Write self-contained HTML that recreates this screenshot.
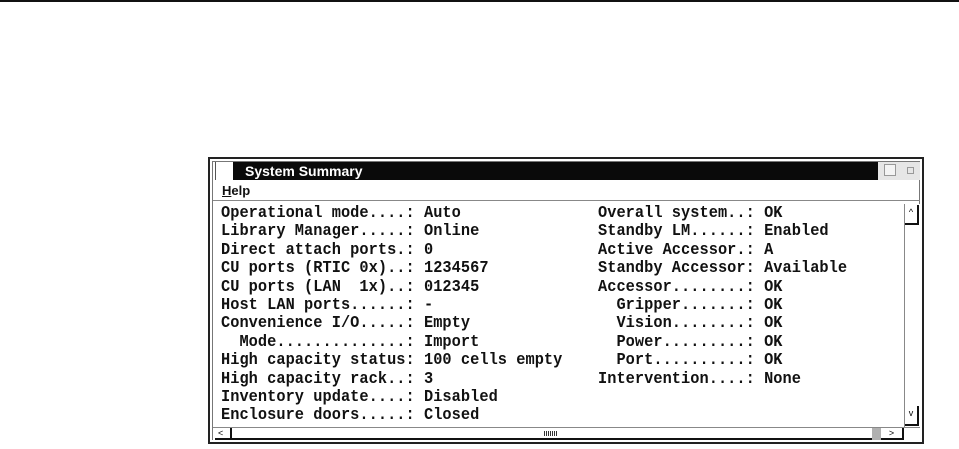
<!DOCTYPE html>
<html><head><style>
body{margin:0;width:959px;height:449px;background:#fff;position:relative;overflow:hidden;font-family:"Liberation Sans",sans-serif}
.abs{position:absolute}
.txt{position:absolute;font-family:"Liberation Mono",monospace;font-weight:bold;font-size:17px;line-height:18.4px;white-space:pre;color:#111;letter-spacing:0.05px;transform:scaleX(0.9);transform-origin:0 0}
</style></head><body>
<div class="abs" style="left:0;top:0;width:959px;height:2px;background:#111"></div>
<div class="abs" style="left:208px;top:157px;width:716px;height:287px;border:2px solid #222;box-sizing:border-box;background:#fff"></div>
<div class="abs" style="left:212px;top:161px;width:708px;height:279px;border:1px solid #777;box-sizing:border-box"></div>
<div class="abs" style="left:215px;top:162px;width:18px;height:18px;background:#fff;border-left:1px solid #555"></div>
<div class="abs" style="left:233px;top:162px;width:645px;height:18px;background:#0a0a0a;color:#fff;font-weight:bold;font-size:14px;line-height:18px;padding-left:12px;box-sizing:border-box">System Summary</div>
<div class="abs" style="left:878px;top:162px;width:42px;height:18px;background:#e6e6e6"></div>
<div class="abs" style="left:884px;top:164px;width:12px;height:12px;border:1px solid #999;box-sizing:border-box;background:#f4f4f4"></div>
<div class="abs" style="left:907px;top:167px;width:7px;height:7px;border:1px solid #999;box-sizing:border-box"></div>
<div class="abs" style="left:222px;top:183px;font-weight:bold;font-size:13px;line-height:16px;color:#111"><span style="text-decoration:underline">H</span>elp</div>
<div class="abs" style="left:213px;top:200px;width:707px;height:1px;background:#888"></div>
<div class="txt" style="left:221px;top:205px">Operational mode....: Auto
Library Manager.....: Online
Direct attach ports.: 0
CU ports (RTIC 0x)..: 1234567
CU ports (LAN  1x)..: 012345
Host LAN ports......: -
Convenience I/O.....: Empty
  Mode..............: Import
High capacity status: 100 cells empty
High capacity rack..: 3
Inventory update....: Disabled
Enclosure doors.....: Closed</div>
<div class="txt" style="left:598px;top:205px">Overall system..: OK
Standby LM......: Enabled
Active Accessor.: A
Standby Accessor: Available
Accessor........: OK
  Gripper.......: OK
  Vision........: OK
  Power.........: OK
  Port..........: OK
Intervention....: None</div>
<div class="abs" style="left:904px;top:204px;width:16px;height:223px;border-left:1px solid #888;box-sizing:border-box;background:#fff"></div>
<div class="abs" style="left:905px;top:205px;width:14px;height:20px;border-right:2px solid #111;border-bottom:2px solid #111;box-sizing:border-box;font-size:9px;text-align:center;line-height:14px">^</div>
<div class="abs" style="left:905px;top:406px;width:14px;height:20px;border-right:2px solid #111;border-bottom:2px solid #111;box-sizing:border-box;font-size:9px;text-align:center;line-height:14px">v</div>
<div class="abs" style="left:213px;top:427px;width:707px;height:13px;border-top:1px solid #888;box-sizing:border-box;background:#fff"></div>
<div class="abs" style="left:215px;top:428px;width:657px;height:12px;border-bottom:2px solid #111;box-sizing:border-box"></div>
<div class="abs" style="left:230px;top:428px;width:2px;height:12px;background:#111"></div>
<div class="abs" style="left:218px;top:428px;font-size:9px;line-height:11px">&lt;</div>
<div class="abs" style="left:544px;top:431px;width:14px;height:5px;background:repeating-linear-gradient(90deg,#333 0 1px,#fff 1px 2px)"></div>
<div class="abs" style="left:872px;top:428px;width:9px;height:12px;background:#b0b0b0"></div>
<div class="abs" style="left:881px;top:428px;width:23px;height:12px;border-right:2px solid #111;border-bottom:2px solid #111;box-sizing:border-box;font-size:9px;line-height:11px;text-align:center">&gt;</div>
</body></html>
